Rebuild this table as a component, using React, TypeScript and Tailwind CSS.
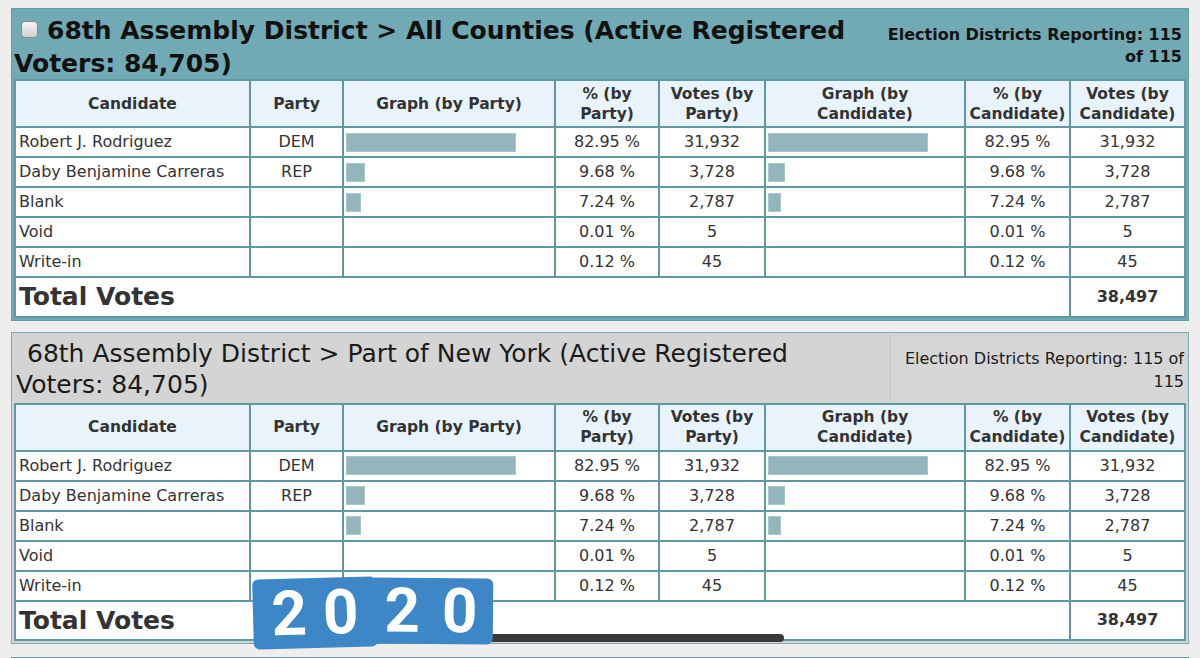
import React from 'react';

type Row = {
  name: string;
  party: string;
  partyBar: number;
  candBar: number;
  pct: string;
  votes: string;
};

const rows: Row[] = [
  { name: 'Robert J. Rodriguez', party: 'DEM', partyBar: 170, candBar: 160, pct: '82.95 %', votes: '31,932' },
  { name: 'Daby Benjamine Carreras', party: 'REP', partyBar: 19, candBar: 17, pct: '9.68 %', votes: '3,728' },
  { name: 'Blank', party: '', partyBar: 15, candBar: 13, pct: '7.24 %', votes: '2,787' },
  { name: 'Void', party: '', partyBar: 0, candBar: 0, pct: '0.01 %', votes: '5' },
  { name: 'Write-in', party: '', partyBar: 0, candBar: 0, pct: '0.12 %', votes: '45' },
];

const font = { fontFamily: '"DejaVu Sans", Verdana, sans-serif' };
const stickerFont = { fontFamily: 'Roboto, "Open Sans", sans-serif' };

function Bar({ w }: { w: number }) {
  if (!w) return null;
  return <div className="h-[19px] bg-[#93b5bc] border border-[#a9c6cc]" style={{ width: w }} />;
}

function ResultsTable() {
  const th = 'border-2 border-[#5f97a2] font-bold text-[15.5px] leading-[20px] text-[#333] text-center align-middle';
  const td = 'border-2 border-[#5f97a2] text-[16px] text-[#333] h-[30px] align-middle';
  return (
    <table className="w-full table-fixed border-collapse bg-white">
      <colgroup>
        <col className="w-[235px]" />
        <col className="w-[93px]" />
        <col className="w-[212px]" />
        <col className="w-[104px]" />
        <col className="w-[106px]" />
        <col className="w-[200px]" />
        <col className="w-[105px]" />
        <col />
      </colgroup>
      <thead>
        <tr className="bg-[#e9f3fb] h-[47px]">
          <th className={th}>Candidate</th>
          <th className={th}>Party</th>
          <th className={th}>Graph (by Party)</th>
          <th className={th}>% (by<br />Party)</th>
          <th className={th}>Votes (by<br />Party)</th>
          <th className={th}>Graph (by<br />Candidate)</th>
          <th className={th + ' whitespace-nowrap'}>% (by<br />Candidate)</th>
          <th className={th + ' whitespace-nowrap'}>Votes (by<br />Candidate)</th>
        </tr>
      </thead>
      <tbody>
        {rows.map((r) => (
          <tr key={r.name}>
            <td className={td + ' pl-[3px] whitespace-nowrap'}>{r.name}</td>
            <td className={td + ' text-center'}>{r.party}</td>
            <td className={td + ' px-[2px]'}><Bar w={r.partyBar} /></td>
            <td className={td + ' text-center'}>{r.pct}</td>
            <td className={td + ' text-center'}>{r.votes}</td>
            <td className={td + ' px-[2px]'}><Bar w={r.candBar} /></td>
            <td className={td + ' text-center'}>{r.pct}</td>
            <td className={td + ' text-center'}>{r.votes}</td>
          </tr>
        ))}
        <tr className="h-[39px]">
          <td colSpan={7} className="border-2 border-[#5f97a2] pl-[3px] text-[25px] font-bold text-[#333] align-middle">
            Total Votes
          </td>
          <td className="border-2 border-[#5f97a2] text-center text-[16px] font-bold text-[#333] align-middle">38,497</td>
        </tr>
      </tbody>
    </table>
  );
}

export default function App() {
  return (
    <div className="relative w-[1200px] h-[658px] overflow-hidden bg-[#eeeeee] pt-[8px] px-[11px]" style={font}>
      {/* All counties panel */}
      <div className="bg-[#71a9b4] border border-[#649ca7] p-[2px]">
        <div className="flex items-start h-[68px]">
          <div className="flex-1 pl-[7px] pt-[3px] text-[25px] leading-[33px] font-bold text-[#111]">
            <span className="inline-block w-[17px] h-[17px] rounded-[4px] border border-[#8a8a8a] bg-gradient-to-b from-[#f6f6f6] to-[#cfcfcf] mr-[9px] align-[1px]" />
            68th Assembly District &gt; All Counties (Active Registered
            <br />
            <span className="-ml-[7px]">Voters: 84,705)</span>
          </div>
          <div className="w-[320px] pt-[13px] pr-[4px] text-right text-[16px] leading-[22px] font-bold text-[#111]">
            Election Districts Reporting: 115
            <br />
            of 115
          </div>
        </div>
        <ResultsTable />
      </div>

      {/* Part of New York panel */}
      <div className="mt-[11px] bg-[#d4d4d4] border border-[#7eaab3] p-[2px]">
        <div className="flex items-stretch h-[68px]">
          <div className="flex-1 pl-[13px] pt-[3px] text-[25px] leading-[31px] text-[#1a1a1a]">
            68th Assembly District &gt; Part of New York (Active Registered
            <br />
            <span className="-ml-[11px]">Voters: 84,705)</span>
          </div>
          <div className="w-[296px] border-l border-[#c6c6c6] bg-[#d6d6d6] pt-[12px] pr-[2px] text-right text-[16px] leading-[23px] text-[#1a1a1a]">
            Election Districts Reporting: 115 of
            <br />
            115
          </div>
        </div>
        <ResultsTable />
      </div>

      {/* next panel peeking */}
      <div className="mt-[13px] h-[10px] bg-[#71a9b4] border border-[#649ca7]" />

      {/* home indicator */}
      <div className="absolute left-[476px] top-[634px] w-[308px] h-[8px] rounded-full bg-[#3a3a3a]" />

      {/* 2020 sticker */}
      <div className="absolute left-[253px] top-[578px] flex">
        <div className="w-[124px] h-[70px] bg-[#3d87c6] rounded-[6px] -rotate-[1.5deg] flex items-center justify-center gap-[16px] text-white font-bold text-[62px] leading-none" style={stickerFont}>
          <span>2</span>
          <span>0</span>
        </div>
        <div className="-ml-[8px] w-[124px] h-[66px] bg-[#3d87c6] rounded-[6px] rotate-[0.5deg] flex items-center justify-center gap-[22px] text-white font-bold text-[62px] leading-none" style={stickerFont}>
          <span>2</span>
          <span>0</span>
        </div>
      </div>
    </div>
  );
}
